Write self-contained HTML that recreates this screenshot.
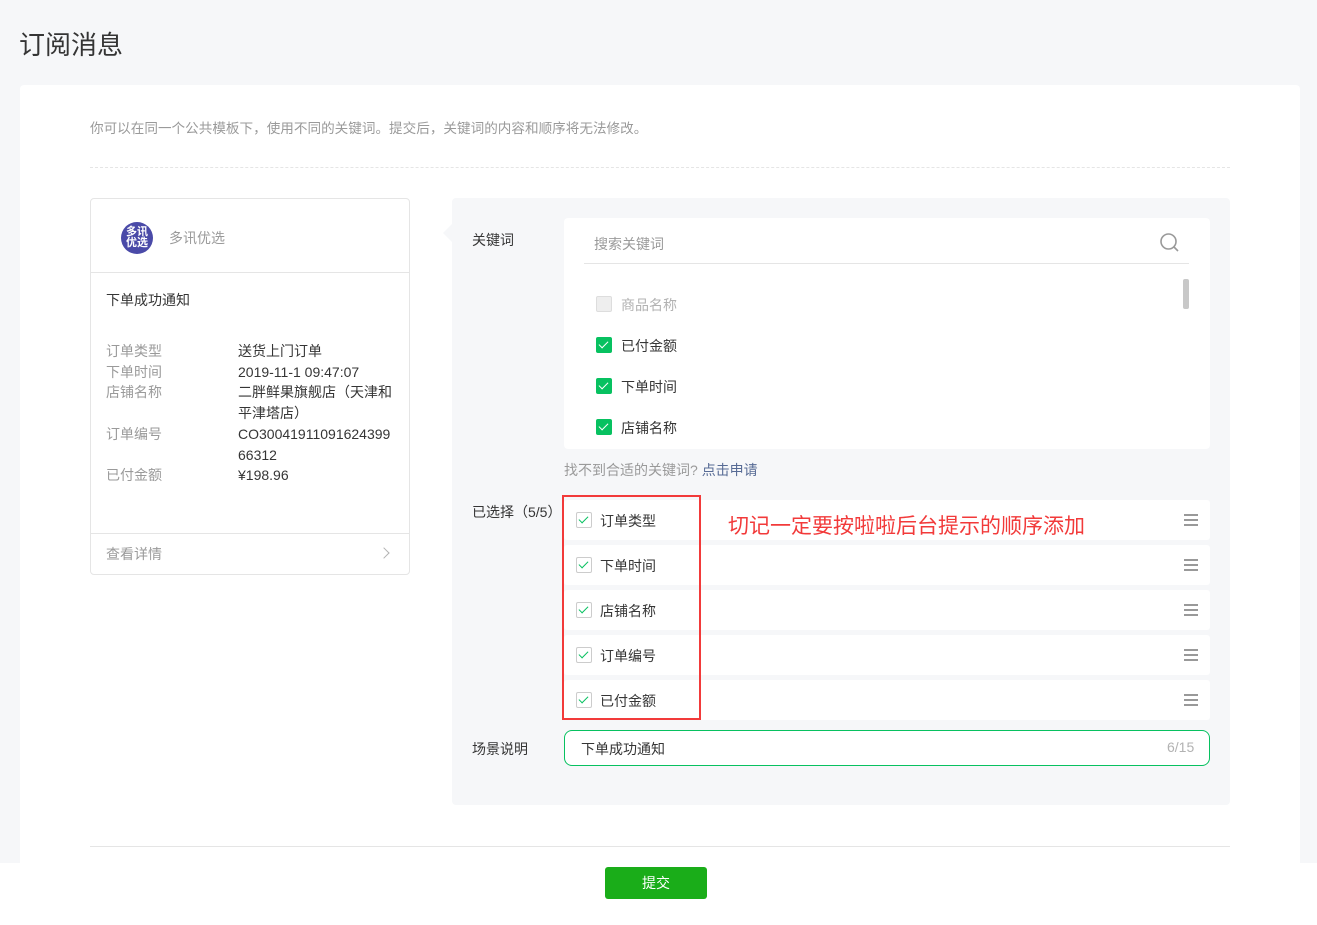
<!DOCTYPE html>
<html><head><meta charset="utf-8"><style>
*{margin:0;padding:0;box-sizing:border-box}
html,body{width:1317px;height:925px;overflow:hidden}
body{background:#f6f7f9;font-family:"Liberation Sans","Noto Sans CJK SC",sans-serif;position:relative;color:#353535;font-size:14px}
.a{position:absolute}
.t{white-space:nowrap}
.cb{position:absolute;width:16px;height:16px;border-radius:2px}
.cb.on{background:#07c160}
.cb.on::after{content:"";position:absolute;left:5px;top:2px;width:4px;height:8px;border:solid #fff;border-width:0 1.5px 1.5px 0;transform:rotate(45deg)}
.cb.o{border:1px solid #ccc;background:#fff}
.cb.o::after{content:"";position:absolute;left:4px;top:1px;width:4px;height:8px;border:solid #07c160;border-width:0 1.5px 1.5px 0;transform:rotate(45deg)}
.row{position:absolute;left:564px;width:646px;height:40px;background:#fff;border-radius:3px}
.ham{position:absolute;right:12px;top:14px;width:14px;height:12px;border-top:2px solid #999;border-bottom:2px solid #999}
.ham::after{content:"";position:absolute;left:0;right:0;top:3px;height:2px;background:#999}
</style></head><body>
<div class="a t" style="left:19px;top:25px;font-size:26px;color:#353535">订阅消息</div>
<div class="a" style="left:20px;top:85px;width:1280px;height:840px;background:#fff;border-radius:4px"></div>
<div class="a" style="left:0;top:863px;width:1317px;height:62px;background:#fff"></div>
<div class="a t" style="left:90px;top:117px;color:#9a9a9a;font-size:13.6px">你可以在同一个公共模板下，使用不同的关键词。提交后，关键词的内容和顺序将无法修改。</div>
<div class="a" style="left:90px;top:167px;width:1140px;border-top:1px dashed #e5e5e5"></div>

<!-- left card -->
<div class="a" style="left:90px;top:198px;width:320px;height:377px;border:1px solid #e5e5e5;border-radius:4px;background:#fff"></div>
<div class="a" style="left:121px;top:222px;width:32px;height:32px;border-radius:50%;background:#4a4aa8;color:#fff;font-size:11px;line-height:11px;text-align:center;padding-top:5px;font-weight:bold">多讯<br>优选</div>
<div class="a t" style="left:169px;top:228px;color:#9a9a9a">多讯优选</div>
<div class="a" style="left:91px;top:272px;width:318px;border-top:1px solid #e5e5e5"></div>
<div class="a t" style="left:106px;top:290px;color:#353535">下单成功通知</div>
<div class="a" style="left:106px;top:341px;line-height:20.7px;color:#9a9a9a">订单类型<br>下单时间<br>店铺名称<br><br>订单编号<br><br>已付金额</div>
<div class="a" style="left:238px;top:341px;line-height:20.7px;color:#353535;width:165px">送货上门订单<br>2019-11-1 09:47:07<br>二胖鲜果旗舰店（天津和<br>平津塔店）<br>CO30041911091624399<br>66312<br>¥198.96</div>
<div class="a" style="left:91px;top:533px;width:318px;border-top:1px solid #e5e5e5"></div>
<div class="a t" style="left:106px;top:544px;color:#9a9a9a">查看详情</div>
<div class="a" style="left:380px;top:549px;width:8px;height:8px;border:solid #b2b2b2;border-width:1.5px 1.5px 0 0;transform:rotate(45deg)"></div>

<!-- right panel -->
<div class="a" style="left:452px;top:198px;width:778px;height:607px;background:#f6f7f9;border-radius:4px"></div>
<div class="a" style="left:443px;top:224px;width:0;height:0;border:9px solid transparent;border-right-color:#f6f7f9;border-left:0"></div>
<div class="a t" style="left:472px;top:230px">关键词</div>
<div class="a" style="left:564px;top:218px;width:646px;height:231px;background:#fff;border-radius:4px"></div>
<div class="a t" style="left:594px;top:234px;color:#9a9a9a">搜索关键词</div>
<svg class="a" style="left:1159px;top:232px" width="22" height="22" viewBox="0 0 22 22"><circle cx="9.5" cy="9.5" r="7.5" fill="none" stroke="#999" stroke-width="1.6"/><line x1="15" y1="15" x2="19" y2="19" stroke="#999" stroke-width="1.6"/></svg>
<div class="a" style="left:584px;top:263px;width:605px;border-top:1px solid #e5e5e5"></div>
<div class="a" style="left:1183px;top:279px;width:6px;height:30px;background:#c8c8c8;border-radius:2px"></div>
<div class="cb" style="left:596px;top:296px;background:#eee;border:1px solid #ddd"></div>
<div class="a t" style="left:621px;top:295px;color:#b2b2b2">商品名称</div>
<div class="cb on" style="left:596px;top:337px"></div><div class="a t" style="left:621px;top:336px">已付金额</div>
<div class="cb on" style="left:596px;top:378px"></div><div class="a t" style="left:621px;top:377px">下单时间</div>
<div class="cb on" style="left:596px;top:419px"></div><div class="a t" style="left:621px;top:418px">店铺名称</div>
<div class="a t" style="left:564px;top:460px;color:#9a9a9a">找不到合适的关键词? <span style="color:#576b95">点击申请</span></div>

<div class="a t" style="left:472px;top:502px">已选择（5/5）</div>
<div class="row" style="top:500px"><div class="ham"></div></div>
<div class="row" style="top:545px"><div class="ham"></div></div>
<div class="row" style="top:590px"><div class="ham"></div></div>
<div class="row" style="top:635px"><div class="ham"></div></div>
<div class="row" style="top:680px"><div class="ham"></div></div>
<div class="cb o" style="left:576px;top:512px"></div><div class="a t" style="left:600px;top:511px">订单类型</div>
<div class="cb o" style="left:576px;top:557px"></div><div class="a t" style="left:600px;top:556px">下单时间</div>
<div class="cb o" style="left:576px;top:602px"></div><div class="a t" style="left:600px;top:601px">店铺名称</div>
<div class="cb o" style="left:576px;top:647px"></div><div class="a t" style="left:600px;top:646px">订单编号</div>
<div class="cb o" style="left:576px;top:692px"></div><div class="a t" style="left:600px;top:691px">已付金额</div>
<div class="a" style="left:562px;top:495px;width:139px;height:225px;border:2px solid #f23a3a"></div>
<div class="a t" style="left:728px;top:510px;font-size:21px;color:#f23a3a">切记一定要按啦啦后台提示的顺序添加</div>

<div class="a t" style="left:472px;top:739px">场景说明</div>
<div class="a" style="left:564px;top:730px;width:646px;height:36px;border:1px solid #07c160;border-radius:8px;background:#fff"></div>
<div class="a t" style="left:581px;top:739px">下单成功通知</div>
<div class="a t" style="left:1167px;top:739px;color:#b2b2b2">6/15</div>

<div class="a" style="left:90px;top:846px;width:1140px;border-top:1px solid #e5e5e5"></div>
<div class="a" style="left:605px;top:867px;width:102px;height:32px;background:#1aad19;border-radius:3px;color:#fff;text-align:center;line-height:32px">提交</div>
</body></html>
